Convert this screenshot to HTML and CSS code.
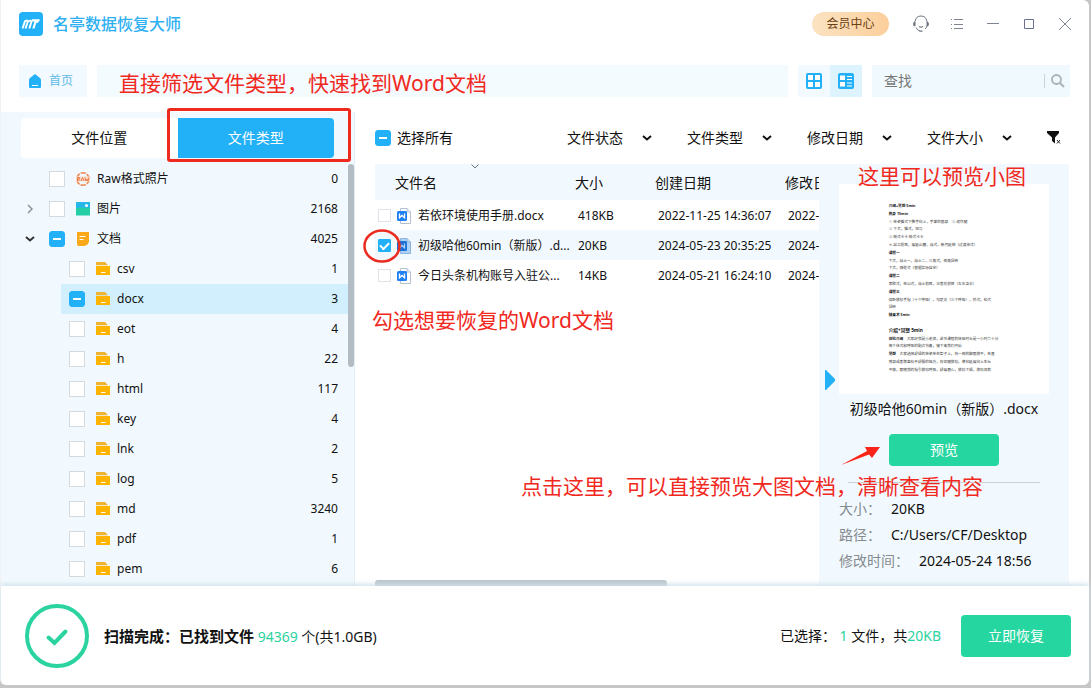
FILE: index.html
```html
<!DOCTYPE html>
<html lang="zh-CN">
<head>
<meta charset="utf-8">
<title>名亭数据恢复大师</title>
<link rel="stylesheet" href="styles.css">
</head>
<body>
<svg width="0" height="0" class="defs" aria-hidden="true">
  <symbol id="folder" viewBox="0 0 14 14"><path d="M0 0h9l3 3.200H0z" fill="#eeb32f"/><path d="M0 4h14v8.500q0 .5-.5.5H.5q-.5 0-.5-.5z" fill="#ffb400"/><path d="M5 10.500h4.500" stroke="#fff" fill="none"/></symbol>
  <symbol id="word" viewBox="0 0 14 16"><path d="M3.500.500H10L13.500 4V15.500H3.500z" fill="#fff" stroke="#b3c0d2"/><path d="M10 .5V4h3.500" fill="#e6edf6" stroke="#b3c0d2"/><rect y="3" width="10" height="10" rx="1.500" fill="#1e80f5"/><path d="M2.500 5.500v4.300L5 7.500l2.500 2.300V5.500" fill="none" stroke="#fff" stroke-width="1.300"/></symbol>
  <symbol id="word-on" viewBox="0 0 14 16"><path d="M3.500.500H10L13.500 4V15.500H3.500z" fill="#aed2f6" stroke="#8fb3dc"/><path d="M10 .5V4h3.500" fill="#c4def8" stroke="#8fb3dc"/><rect y="3" width="10" height="10" rx="1.500" fill="#1c70d6"/><path d="M2.500 5.500v4.300L5 7.500l2.500 2.300V5.500" fill="none" stroke="#a9d0fa" stroke-width="1.300"/></symbol>
  <symbol id="down" viewBox="0 0 10 6"><path d="M1 1l4 3.500L9 1" fill="none" stroke="currentColor" stroke-width="2"/></symbol>
</svg>
<div class="window">
  <header class="titlebar">
    <svg class="logo" viewBox="0 0 24 24"><rect width="24" height="24" rx="4" fill="#22b0f7"/><path d="M3.500 16.500L6 9.200q3.200-1.600 2.700.8L6.500 16.500M8.500 10q3.500-2.500 4-.3L10.300 16.500" fill="none" stroke="#fff" stroke-width="1.900"/><path d="M12.800 7.200h8q-.3 3.300-3.500 3.800l-1.800 5.500h-2.200l2.200-7h-2.700z" fill="#fff"/></svg>
    <h1 class="app-name">名亭数据恢复大师</h1>
    <button class="vip">会员中心</button>
    <div class="window-tools">
      <button class="tool" aria-label="客服"><svg viewBox="0 0 18 18"><path d="M3 11V6.500Q4 1 9 1t6 5.500V11M4 12.500q1.500 3 4 3.500M15 11q-.5 2-2 3" fill="none" stroke="#6d7580"/><path d="M3 6.500Q1 7 1 9t2 2.500zM15 6.500q2 .5 2 2.500t-2 2.500z" fill="#6d7580"/><path d="M7 11.500q2 1.200 4 0M7.500 16.200h3" fill="none" stroke="#6d7580" stroke-width="1.300"/></svg></button>
      <button class="tool" aria-label="菜单"><svg viewBox="0 0 18 18"><path d="M3 4.500h1M3 9.500h1M3 13.500h1M6 4.500h9M6 9.500h9M6 13.500h9" stroke="#7d8590"/></svg></button>
      <button class="tool" aria-label="最小化"><svg viewBox="0 0 18 18"><path d="M3 8.500h12" stroke="#7d8590"/></svg></button>
      <button class="tool" aria-label="最大化"><svg viewBox="0 0 18 18"><path d="M4.500 4.500h9v9h-9z" fill="none" stroke="#6b7090"/></svg></button>
      <button class="tool" aria-label="关闭"><svg viewBox="0 0 18 18"><path d="M3 3l12 12M15 3L3 15" stroke="#7d8590"/></svg></button>
    </div>
  </header>

  <div class="toolbar">
    <a class="home" href="#"><svg viewBox="0 0 12 14"><path d="M6 0l5 4q1 .8 1 2v7q0 1-1 1H1q-1 0-1-1V6q0-1.200 1-2z" fill="#22b0f7"/><path d="M3 11.500h6" stroke="#fff"/></svg>首页</a>
    <div class="path"><p class="note">直接筛选文件类型，快速找到Word文档</p></div>
    <div class="views">
      <button class="view" aria-label="网格视图"><svg viewBox="0 0 16 16"><rect x="1" y="1" width="14" height="14" rx="1" fill="#fff" stroke="#22b0f7" stroke-width="2"/><path d="M8 1v14M1 8h14" stroke="#22b0f7" stroke-width="2"/></svg></button>
      <button class="view view-on" aria-label="列表视图"><svg viewBox="0 0 16 16"><rect width="16" height="16" rx="2" fill="#22b0f7"/><path d="M2 2.500h5V7H2zM2 9h5v4.500H2zM9 3h5v1H9zM9 6h5v1H9zM9 9.500h5v1H9zM9 12.500h5v1H9z" fill="#fff"/></svg></button>
    </div>
    <div class="search">
      <input type="text" class="search-input" placeholder="查找" aria-label="查找">
      <button class="search-go" aria-label="搜索"><svg viewBox="0 0 14 14"><circle cx="5.500" cy="5.500" r="4.500" fill="none" stroke="#a9b1b8" stroke-width="1.800"/><path d="M9 9l4 4" stroke="#a9b1b8" stroke-width="2"/></svg></button>
    </div>
  </div>

  <div class="content">
    <aside class="side">
      <div class="tabs">
        <button class="tab">文件位置</button>
        <button class="tab tab-on">文件类型</button>
        <span class="frame"></span>
      </div>
      <div class="tree-wrap">
        <ul class="tree">
          <li class="node"><span class="arrow"></span><label class="pick"><input type="checkbox" class="box"><svg class="kind" viewBox="0 0 14 14"><circle cx="7" cy="7" r="6.200" fill="none" stroke="#f08a55" stroke-width="1.600" stroke-dasharray="5.500 1"/><path d="M0 4.500h14v5H0z" fill="#f8d9c8"/><path d="M1.500 9V5.500h2v1.500h-2l2 2M5 9l1.500-3.500L8 9M9 5.500l1 3.500 1-2 1 2 1-3.500" fill="none" stroke="#ef7a40"/></svg>Raw格式照片</label><span class="count">0</span></li>
          <li class="node"><span class="arrow"><svg viewBox="0 0 6 10"><path d="M1 1l4 4-4 4" fill="none" stroke="#8b939a" stroke-width="1.500"/></svg></span><label class="pick"><input type="checkbox" class="box"><svg class="kind" viewBox="0 0 14 14"><path d="M0 0h14v7H0z" fill="#25b7e8"/><path d="M0 6l5-.5L14 6v7.500H0z" fill="#25cfa5"/><circle cx="10.500" cy="3.500" r="1.500" fill="#fff"/></svg>图片</label><span class="count">2168</span></li>
          <li class="node"><span class="arrow arrow-open"><svg viewBox="0 0 10 6"><use href="#down"/></svg></span><label class="pick"><input type="checkbox" class="box part"><svg class="kind" viewBox="0 0 14 14"><path d="M1 0h12v9.500q-1 4-5 4.500H2.500Q1 14 1 12z" fill="#fba919"/><path d="M3.500 4.500h6M3.500 7.500h4" stroke="#fff"/></svg>文档</label><span class="count">4025</span></li>
          <li class="node leaf"><label class="pick"><input type="checkbox" class="box"><svg class="kind"><use href="#folder"/></svg>csv</label><span class="count">1</span></li>
          <li class="node leaf leaf-on"><label class="pick"><input type="checkbox" class="box part"><svg class="kind"><use href="#folder"/></svg>docx</label><span class="count">3</span></li>
          <li class="node leaf"><label class="pick"><input type="checkbox" class="box"><svg class="kind"><use href="#folder"/></svg>eot</label><span class="count">4</span></li>
          <li class="node leaf"><label class="pick"><input type="checkbox" class="box"><svg class="kind"><use href="#folder"/></svg>h</label><span class="count">22</span></li>
          <li class="node leaf"><label class="pick"><input type="checkbox" class="box"><svg class="kind"><use href="#folder"/></svg>html</label><span class="count">117</span></li>
          <li class="node leaf"><label class="pick"><input type="checkbox" class="box"><svg class="kind"><use href="#folder"/></svg>key</label><span class="count">4</span></li>
          <li class="node leaf"><label class="pick"><input type="checkbox" class="box"><svg class="kind"><use href="#folder"/></svg>lnk</label><span class="count">2</span></li>
          <li class="node leaf"><label class="pick"><input type="checkbox" class="box"><svg class="kind"><use href="#folder"/></svg>log</label><span class="count">5</span></li>
          <li class="node leaf"><label class="pick"><input type="checkbox" class="box"><svg class="kind"><use href="#folder"/></svg>md</label><span class="count">3240</span></li>
          <li class="node leaf"><label class="pick"><input type="checkbox" class="box"><svg class="kind"><use href="#folder"/></svg>pdf</label><span class="count">1</span></li>
          <li class="node leaf"><label class="pick"><input type="checkbox" class="box"><svg class="kind"><use href="#folder"/></svg>pem</label><span class="count">6</span></li>
        </ul>
        <div class="bar"><div class="bar-thumb"></div></div>
      </div>
    </aside>

    <main class="main">
      <div class="filters">
        <label class="all"><input type="checkbox" class="box part">选择所有</label>
        <div class="drops">
          <span class="drop"><select class="drop-select" aria-label="文件状态"><option>文件状态</option></select><svg class="drop-icon"><use href="#down"/></svg></span>
          <span class="drop"><select class="drop-select" aria-label="文件类型"><option>文件类型</option></select><svg class="drop-icon"><use href="#down"/></svg></span>
          <span class="drop"><select class="drop-select" aria-label="修改日期"><option>修改日期</option></select><svg class="drop-icon"><use href="#down"/></svg></span>
          <span class="drop"><select class="drop-select" aria-label="文件大小"><option>文件大小</option></select><svg class="drop-icon"><use href="#down"/></svg></span>
          <button class="clear" aria-label="清除筛选"><svg viewBox="0 0 14 14"><path d="M0 0h12v2L8 6.500V12.500L5 10V6.500L0 2z" fill="#111"/><path d="M10 9l3 3.500M13 9l-3 3.500" stroke="#222"/></svg></button>
        </div>
      </div>
      <div class="panes">
        <section class="list">
          <div class="table-clip">
            <table class="files">
              <colgroup><col class="c-name"><col class="c-size"><col class="c-made"><col class="c-edit"></colgroup>
              <thead><tr><th class="th-name">文件名<svg class="sort" viewBox="0 0 8 5"><path d="M.5.500L4 4 7.500.500" fill="none" stroke="#6b7683"/></svg></th><th>大小</th><th>创建日期</th><th>修改日期</th></tr></thead>
              <tbody>
                <tr><td><label class="file"><input type="checkbox" class="box box-s"><svg class="doc"><use href="#word"/></svg>若依环境使用手册.docx</label></td><td>418KB</td><td>2022-11-25 14:36:07</td><td>2022-11-25 14:36:07</td></tr>
                <tr class="row-on"><td><label class="file"><input type="checkbox" class="box box-s" checked><svg class="doc"><use href="#word-on"/></svg>初级哈他60min（新版）.d...</label><svg class="ring" viewBox="0 0 38 34"><ellipse cx="19" cy="17" rx="17.500" ry="15.500" fill="none" stroke="#ec2b20" stroke-width="2.500"/></svg></td><td>20KB</td><td>2024-05-23 20:35:25</td><td>2024-05-24 18:56:10</td></tr>
                <tr><td><label class="file"><input type="checkbox" class="box box-s"><svg class="doc"><use href="#word"/></svg>今日头条机构账号入驻公...</label></td><td>14KB</td><td>2024-05-21 16:24:10</td><td>2024-05-21 16:24:10</td></tr>
              </tbody>
            </table>
          </div>
          <p class="note note-pick">勾选想要恢复的Word文档</p>
          <div class="hbar"></div>
        </section>
        <section class="preview">
          <p class="note note-thumb">这里可以预览小图</p>
          <svg class="fold" viewBox="0 0 10 20"><path d="M0 0h1l9 9v2l-9 9H0z" fill="#22b0f7"/></svg>
          <svg class="page" viewBox="0 0 630 630" fill="#333">
            <rect width="630" height="630" fill="#fff"/>
            <g font-size="11">
              <text x="149" y="69" class="b">介绍+冥想 5min</text>
              <text x="149" y="93" class="b">热身 15min</text>
              <text x="149" y="116">① 坐姿猫式下推手向上，手掌的根部　② 动作腿</text>
              <text x="149" y="139">② 下犬，猫式，斑马</text>
              <text x="149" y="163">③ 椅式卡卡 椅式卡卡</text>
              <text x="149" y="186">④ 站立前屈，展延山腰，战式，新月延伸（过渡体式）</text>
              <text x="149" y="210" class="b">课程一</text>
              <text x="149" y="233">下犬，战士一，战士二，三角式，侧角扭转</text>
              <text x="149" y="256">下犬，骆驼式（根据实际自定）</text>
              <text x="149" y="280" class="b">课程二</text>
              <text x="149" y="303">串联式，坐山式，战士前屈，半莲花前屈（左右各半）</text>
              <text x="149" y="326" class="b">课程三</text>
              <text x="149" y="350">仰卧放松手指（十个呼吸），勾足尖（三个呼吸），桥式，轮式</text>
              <text x="149" y="373">扭转</text>
              <text x="149" y="397" class="b">结束术 5min</text>
              <text x="149" y="467"><tspan class="b">体验介绍</tspan>　大家好我是小老师，这节课程的体验时长是一小时六十分</text>
              <text x="149" y="490">每个体式和呼吸的配合节奏，接下来我们开始</text>
              <text x="149" y="513"><tspan class="b">冥想</tspan>　大家选择舒适的坐姿坐在垫子上，将一侧的脚跟放平，坐直</text>
              <text x="149" y="537">背部或者膝盖有不舒服的地方，将双腿放松，脊柱延展向上生长</text>
              <text x="149" y="560">平稳，跟随我的指引放松呼吸，舒展眉心，放松下颌，放松双肩</text>
            </g>
            <text x="149" y="444" font-size="14" class="b">介绍+冥想 5min</text>
          </svg>
          <p class="preview-name">初级哈他60min（新版）.docx</p>
          <button class="open">预览</button>
          <svg class="pointer" viewBox="0 0 40 20"><path d="M0 20L26 6 24 2 39 2 31 13 28 9.500z" fill="#fb2418"/></svg>
          <hr class="rule">
          <p class="note note-open">点击这里，可以直接预览大图文档，清晰查看内容</p>
          <dl class="facts">
            <div class="fact"><dt>大小：</dt><dd>20KB</dd></div>
            <div class="fact"><dt>路径：</dt><dd>C:/Users/CF/Desktop</dd></div>
            <div class="fact"><dt>修改时间：</dt><dd>2024-05-24 18:56</dd></div>
          </dl>
        </section>
      </div>
    </main>
  </div>

  <footer class="footer">
    <svg class="done" viewBox="0 0 64 64"><circle cx="32" cy="32" r="30" fill="none" stroke="#2bd3a0" stroke-width="4"/><path d="M23.500 33.500l6 5.500L40.500 27.500" fill="none" stroke="#2bd3a0" stroke-width="4" stroke-linecap="round"/></svg>
    <p class="result"><strong>扫描完成：已找到文件</strong> <span class="green">94369</span> 个(共1.0GB)</p>
    <p class="chosen">已选择： <span class="green">1</span> 文件，共<span class="green">20KB</span></p>
    <button class="recover">立即恢复</button>
  </footer>
</div>
</body>
</html>
```
FILE: styles.css
```css
* { box-sizing: border-box; }
body {
  margin: 0;
  background: #c6c6c6;
  color: #111;
  font: 14px/20px "Noto Sans", "Noto Sans CJK SC", sans-serif;
}
h1, p, ul, dl, dd { margin: 0; padding: 0; }
button, input, select { font: inherit; color: inherit; }
button { border: 0; padding: 0; background: none; }
svg { display: block; flex: none; }
.defs { position: absolute; }
.window {
  display: flex;
  flex-direction: column;
  min-height: calc(100vh - 3px);
  margin-right: 2px;
  background: #fff;
  border-left: 1px solid #f0f2f3;
  border-radius: 0 6px 6px 6px;
}

.titlebar {
  display: flex;
  align-items: center;
  height: 48px;
  padding: 0 15px 0 18px;
}
.logo { width: 24px; height: 24px; }
.app-name {
  margin-left: 10px;
  color: #2fb0f2;
  font-size: 16px;
  font-weight: 500;
}
.vip {
  width: 77px;
  height: 24px;
  margin-left: auto;
  border-radius: 12px;
  background: linear-gradient(90deg, #fbe3c2, #fccf9b);
  color: #6b4015;
  font-size: 12px;
}
.window-tools { display: flex; gap: 18px; margin-left: 23px; }
.tool { width: 18px; height: 18px; }

.toolbar {
  display: flex;
  gap: 10px;
  height: 32px;
  margin: 17px 19px 15px 18px;
}
.home {
  display: flex;
  align-items: center;
  gap: 8px;
  width: 68px;
  padding-left: 10px;
  background: #f2faff;
  color: #62b9e6;
  font-size: 12px;
  text-decoration: none;
}
.home svg { width: 12px; height: 14px; }
.path {
  display: flex;
  flex: 1;
  align-items: center;
  padding: 4px 0 0 22px;
  background: #f4fbff;
}
.note {
  color: #f0281d;
  font-size: 21px;
  line-height: 28px;
  white-space: nowrap;
}
.views { display: flex; background: #f2faff; border-radius: 2px; }
.view { width: 32px; padding: 8px; }
.view-on { background: #ddf4fe; }
.search { display: flex; width: 198px; align-items: center; background: #f0f9fe; }
.search-input {
  flex: 1;
  min-width: 0;
  padding: 0 12px;
  border: 0;
  background: none;
}
.search-input::placeholder { color: #777; opacity: 1; }
.search-go { padding: 0 5px 0 6px; border-left: 1px solid #ccd3d8; }
.search-go svg { width: 14px; height: 14px; }

.content { display: flex; flex: 1; }
.side {
  width: 354px;
  padding-top: 6px;
  background: #f2f9fe;
  border-right: 1px solid #e3eef5;
}
.tabs {
  position: relative;
  display: flex;
  height: 40px;
  margin: 0 20px;
  background: #fff;
  border-radius: 4px;
}
.tab { flex: 1; }
.tab-on { background: #22b0f7; color: #fff; border-radius: 0 4px 4px 0; }
.frame {
  position: absolute;
  inset: -10px -17px -4px 146px;
  border: 3px solid #ee2a1f;
  border-radius: 3px;
}
.tree-wrap { display: flex; padding-top: 6px; }
.tree { flex: 1; list-style: none; font-size: 12px; }
.node {
  display: flex;
  align-items: center;
  height: 30px;
  padding: 0 10px 0 24px;
}
.leaf { margin-left: 60px; padding-left: 8px; }
.leaf-on { background: #d2effd; }
.arrow { width: 24px; padding-left: 2px; color: #333; }
.arrow svg { width: 6px; height: 10px; }
.arrow-open { padding-left: 0; }
.arrow-open svg { width: 10px; height: 6px; }
.pick { display: flex; flex: 1; align-items: center; }
.kind { width: 14px; height: 14px; margin: 0 7px 0 11px; }
.bar { width: 6px; }
.bar-thumb { height: 203px; border-radius: 3px; background: #b3bcc2; }

.box {
  display: grid;
  flex: none;
  place-content: center;
  width: 16px;
  height: 16px;
  margin: 0;
  appearance: none;
  background: #fff;
  border: 1px solid #d5dade;
}
.part, .box:checked { background: #22b0f7; border-color: #22b0f7; border-radius: 3px; }
.part::after { content: ""; width: 8px; height: 2px; background: #fff; }
.box-s { width: 13px; height: 13px; border-color: #dfe3e8; }
.box-s:checked { border-radius: 1px; }
.box:checked::after {
  content: "";
  width: 7px;
  height: 4px;
  border: solid #fff;
  border-width: 0 0 2px 2px;
  transform: translateY(-1px) rotate(-45deg);
}

.main { display: flex; flex: 1; flex-direction: column; min-width: 0; padding: 0 20px; }
.filters {
  display: flex;
  align-items: center;
  justify-content: space-between;
  height: 52px;
}
.all { display: flex; align-items: center; gap: 6px; }
.drops { display: flex; align-items: center; gap: 35px; padding-right: 8px; }
.drop { display: grid; align-items: center; width: 85px; }
.drop-select {
  grid-area: 1 / 1;
  width: 100%;
  padding: 0;
  appearance: none;
  background: none;
  border: 0;
}
.drop-icon { grid-area: 1 / 1; justify-self: end; width: 10px; height: 6px; pointer-events: none; }
.clear { width: 14px; height: 14px; }

.panes { display: flex; flex: 1; }
.list { display: flex; flex: 1; flex-direction: column; min-width: 0; }
.table-clip { margin-left: -12px; padding-left: 12px; overflow: hidden; }
.files {
  width: 590px;
  table-layout: fixed;
  border-collapse: collapse;
  text-align: left;
  white-space: nowrap;
}
.c-name { width: 200px; }
.c-size { width: 80px; }
.c-made { width: 130px; }
th { height: 36px; padding: 2px 0 0; background: #f2f9fe; font-weight: 400; }
.th-name { position: relative; padding-left: 20px; }
.sort { position: absolute; top: 0; left: 96px; width: 8px; height: 5px; }
td { position: relative; height: 30px; padding: 1px 3px 0; font-size: 12px; }
.row-on { background: #f2f9fe; }
.file { display: flex; align-items: center; }
.doc { width: 14px; height: 16px; margin: 0 7px 0 6px; }
.ring { position: absolute; left: -12px; top: -1px; width: 38px; height: 34px; }
.note-pick { margin-top: 16px; margin-left: -3px; }
.hbar { width: 292px; height: 6px; margin-top: auto; border-radius: 3px 3px 0 0; background: #bcc5ca; }

.preview {
  position: relative;
  width: 250px;
  padding: 20px 20px 0;
  background: #f2f9fe;
}
.page { width: 210px; height: 210px; }
.b { font-weight: 700; fill: #111; }
.note-thumb { position: absolute; top: -2px; left: 39px; }
.fold { position: absolute; top: 206px; left: 6px; width: 10px; height: 20px; }
.preview-name { margin-top: 5px; text-align: center; white-space: nowrap; }
.open {
  display: block;
  width: 110px;
  height: 32px;
  margin: 15px auto 16px;
  border-radius: 4px;
  background: #26d6a0;
  color: #fff;
}
.pointer { position: absolute; top: 281px; left: 22px; width: 40px; height: 20px; }
.rule { margin: 0 9px; border: 0; border-top: 1px solid #ccd1d4; }
.note-open { position: absolute; top: 308px; right: 86px; }
.facts { margin-top: 13px; }
.fact { display: flex; gap: 10px; height: 26px; align-items: center; white-space: nowrap; }
.fact dt { color: #858b90; }

.footer {
  position: relative;
  display: flex;
  align-items: center;
  padding: 18px 18px 17px 24px;
  background: #fff;
  border-radius: 0 0 6px 6px;
  box-shadow: 0 -2px 5px #cfe2ec;
}
.done { width: 64px; height: 64px; }
.result { margin-left: 15px; }
.result strong { font-size: 15px; }
.green { color: #2bd3a0; }
.chosen { margin-left: auto; }
.recover {
  width: 110px;
  height: 42px;
  margin-left: 20px;
  border-radius: 4px;
  background: #26d6a0;
  color: #fff;
}
```
